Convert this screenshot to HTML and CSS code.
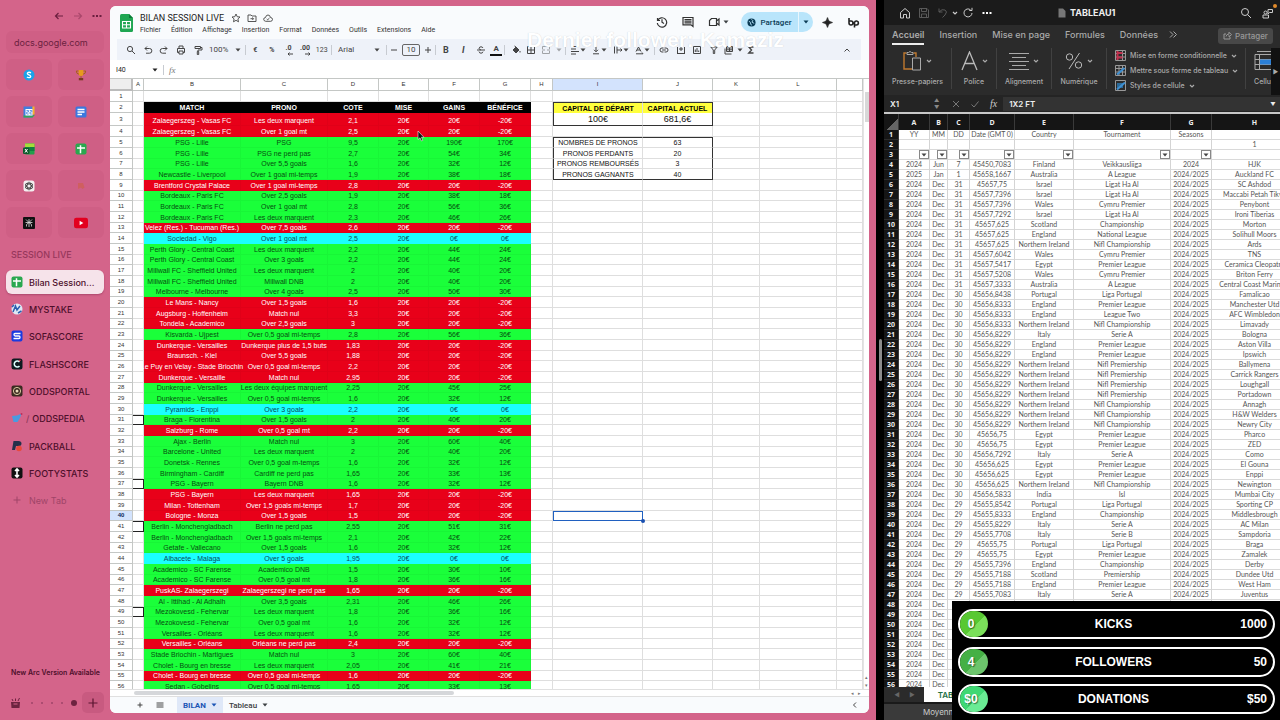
FILE: index.html
```html
<!DOCTYPE html>
<html lang="fr">
<head>
<meta charset="utf-8">
<title>BILAN SESSION LIVE</title>
<link rel="stylesheet" href="styles.css">
</head>
<body>
<svg class="sprite" aria-hidden="true">
  <symbol id="caret" viewBox="0 0 6 6"><path d="M.5 1.5h5L3 4.5z" fill="currentColor"/></symbol>
  <symbol id="chev" viewBox="0 0 6 6"><path d="M1 2l2 2 2-2" fill="none" stroke="currentColor" stroke-width="1.2"/></symbol>
  <symbol id="sheets" viewBox="0 0 12 12"><rect x=".5" y=".5" width="11" height="11" rx="2" fill="#2aa84f"/><path d="M2 5h8M5.5 2.200v8" stroke="#fff" stroke-width="1.500"/></symbol>
</svg>

<main class="arc">
  <aside class="sidebar">
    <div class="nav">
      <button aria-label="Retour"><svg width="10" height="10" viewBox="0 0 10 10"><path d="M9 5H1.500M4.500 2l-3 3 3 3"/></svg></button>
      <button aria-label="Avancer" class="dim"><svg width="10" height="10" viewBox="0 0 10 10"><path d="M1 5h7.500M5.500 2l3 3-3 3"/></svg></button>
      <button aria-label="Plus"><svg width="10" height="10" viewBox="0 0 10 10"><path d="M.5 5h2M4 5h2M7.500 5h2" stroke-width="1.800"/></svg></button>
    </div>
    <input class="url" aria-label="Adresse" value="docs.google.com">
    <div class="tiles">
      <button aria-label="Shazam"><svg viewBox="0 0 12 12"><circle cx="6" cy="6" r="5.500" fill="#1aa3e8"/><path d="M8 3.800C6 2.800 4.200 3.400 4.400 4.700 4.600 6 7.700 5.700 7.700 7.400 7.700 8.800 5.500 9 3.900 8" stroke="#fff" fill="none" stroke-width="1.400"/></svg></button>
      <button aria-label="Trophée"><svg viewBox="0 0 12 12"><path d="M3.500 1h5v3.500Q8.500 7 6 7 3.500 7 3.500 4.500z" fill="#e79a1c"/><path d="M3.500 2H1.300q0 3 2.700 3.200M8.500 2h2.200q0 3-2.700 3.200M6 7v2.500" stroke="#a8601a" fill="none"/><path d="M3.800 9h4.400v2.300H3.800z" fill="#7a3a20"/></svg></button>
      <button aria-label="Agenda"><svg viewBox="0 0 12 12"><path d="M.5.5h9v11h-9z" fill="#3f7fe0"/><path d="M9.500.5h2v8h-2z" fill="#f4b62c"/><path d="M.5 9.500h9l2-1v1l-2 2h-9z" fill="#36a556"/><path d="M2.500 3h7v6.500h-7z" fill="#fff"/><path d="M3.500 4.500h2v1.500h-1.800v2h2M6.800 4.500h2v1.500H7v2h2" stroke="#3f7fe0" fill="none" stroke-width=".8"/></svg></button>
      <button aria-label="Docs"><svg viewBox="0 0 12 12"><rect x=".5" y=".5" width="11" height="11" rx="1.500" fill="#3b78de"/><path d="M2.500 3.500h7M2.500 6h7M2.500 8.500h4.500" stroke="#fff" stroke-width="1.300"/></svg></button>
      <button aria-label="Excel"><svg viewBox="0 0 12 12"><rect x="2" y=".5" width="9.500" height="11" rx="1" fill="#22a04c"/><path d="M2 .5h9.500v3.500H2z" fill="#a5dd3a"/><path d="M6.500 4h5v4h-5z" fill="#10803e"/><rect y="4.500" width="6.500" height="6.500" rx="1" fill="#0d5a2c"/><path d="M2 6l2.500 3.500M4.500 6L2 9.500" stroke="#fff"/></svg></button>
      <button aria-label="Sheets"><svg viewBox="0 0 12 12"><use href="#sheets"/></svg></button>
      <button aria-label="ChatGPT"><svg viewBox="0 0 12 12"><rect x=".5" y=".5" width="11" height="11" rx="2.500" fill="#f3eef0"/><g fill="none" stroke="#333" stroke-width=".7"><ellipse cx="6" cy="6" rx="2" ry="4"/><ellipse cx="6" cy="6" rx="2" ry="4" transform="rotate(60 6 6)"/><ellipse cx="6" cy="6" rx="2" ry="4" transform="rotate(120 6 6)"/></g></svg></button>
      <button aria-label="Extension"><svg viewBox="0 0 12 12"><path d="M3 3h5l1.500 4.500-2 1.500L6 7.500 3 9z" fill="#ce604f" opacity=".7"/></svg></button>
      <button aria-label="Perplexity"><svg viewBox="0 0 12 12"><rect width="12" height="12" rx="1" fill="#111"/><path d="M6 2v8M3 2.500L6 5.500l3-3M2.500 5.500h7M3.500 9.500V7.500L6 5.500l2.500 2v2" fill="none" stroke="#ddd" stroke-width=".8"/></svg></button>
      <button aria-label="YouTube"><svg viewBox="0 0 12 12" class="yt"><rect y="1.500" width="12" height="9" rx="2" fill="#e3001f"/><path d="M4.800 4l3.200 2-3.200 2z" fill="#fff"/></svg></button>
    </div>
    <h2 class="space-name">SESSION LIVE</h2>
    <nav class="tabs">
      <a href="#" class="active"><svg viewBox="0 0 12 12"><use href="#sheets"/></svg>Bilan Session...</a>
      <a href="#"><svg viewBox="0 0 12 12"><circle cx="6" cy="6" r="5.500" fill="#dfe9f5"/><path d="M2 9l2.500-6L6 7l3-4M7 10l3.500-2M1 4l2-2" stroke="#2a5fb0" fill="none" stroke-width="1.500"/></svg>MYSTAKE</a>
      <a href="#"><svg viewBox="0 0 12 12"><rect x=".5" y=".5" width="11" height="11" rx="2" fill="#1b3be0"/><path d="M9.500 3.500H4Q3 3.500 3 4.500T4 6h4Q9 6 9 7.200T8 8.500H2.500" stroke="#fff" fill="none" stroke-width="1.300"/></svg>SOFASCORE</a>
      <a href="#"><svg viewBox="0 0 12 12"><rect x=".5" y=".5" width="11" height="11" rx="2.500" fill="#0d1a20"/><path d="M8.500 4A3 3 0 1 0 8.500 8" fill="none" stroke="#dff" stroke-width="1.500"/><path d="M8 3l1.500-1" stroke="#e0304a" stroke-width="1.500"/></svg>FLASHSCORE</a>
      <a href="#"><svg viewBox="0 0 12 12"><rect x=".5" y=".5" width="11" height="11" rx="2" fill="#3a2a20"/><circle cx="6" cy="6" r="3.600" fill="none" stroke="#d8c9a0"/><circle cx="6" cy="6" r="1.500" fill="#e9dcb8"/></svg>ODDSPORTAL</a>
      <a href="#"><svg viewBox="0 0 12 12"><path d="M1 4l5-.5 4.500-2L9 6 6.500 10H2.500z" fill="#4a9be0"/><circle cx="10.500" cy="2" r="1" fill="#c0305a"/></svg><span class="slash">/</span>ODDSPEDIA</a>
      <a href="#"><svg viewBox="0 0 12 12"><path d="M2.500 1h5q3 0 3 2.500T7.500 6H5l-1 4H1z" fill="#25304a"/><circle cx="8" cy="8.500" r="2.800" fill="#e84a3c"/></svg>PACKBALL</a>
      <a href="#"><svg viewBox="0 0 12 12"><rect x=".5" y=".5" width="11" height="11" rx="2" fill="#111"/><path d="M6 2v8M4 4l2-2 2 2M4 8l2 2 2-2" stroke="#fff" fill="none" stroke-width="1.600"/></svg>FOOTYSTATS</a>
      <a href="#" class="new"><svg viewBox="0 0 12 12"><path d="M6 2.500v7M2.500 6h7" stroke="currentColor"/></svg>New Tab</a>
    </nav>
    <p class="arc-update">New Arc Version Available</p>
    <div class="spaces">
      <svg width="11" height="12" viewBox="0 0 11 12"><path d="M1 5h9l-.5 6h-8z" fill="#6d2340"/><path d="M3 4L2 2M5.500 4V1.500M8 4l1.500-3" stroke="#6d2340"/><path d="M3.500 7h4" stroke="#d4648a"/></svg>
      <i></i><i></i><i></i><i></i><i class="on"></i>
      <button aria-label="Nouveau"><svg width="10" height="10" viewBox="0 0 10 10"><path d="M5 .5v9M.5 5h9" stroke="#5a1530" stroke-width="1.200"/></svg></button>
    </div>
  </aside>

  <section class="gs">
    <header class="doc-head">
      <svg class="logo" viewBox="0 0 13 18"><path d="M1.500 0H9l4 4v12.500Q13 18 11.500 18h-10Q0 18 0 16.500v-15Q0 0 1.500 0z" fill="#1fa652"/><path d="M9 0l4 4H9z" fill="#0b7a38"/><path d="M2.500 7.500h8v6.500h-8zM2.500 10.700h8M6.500 7.500V14" fill="none" stroke="#fff" stroke-width="1.100"/></svg>
      <div class="doc-id">
        <div class="doc-title">
          <h1>BILAN SESSION LIVE</h1>
          <svg viewBox="0 0 10 10"><path d="M5 1l1.200 2.700 2.800.3-2.100 1.900.6 2.900L5 7.300 2.500 8.800l.6-2.900L1 4l2.800-.3z"/></svg>
          <svg viewBox="0 0 10 10"><path d="M1 2h3l1 1h4v5.500H1zM3.500 5.700h3M5.300 4.500l1.200 1.200-1.200 1.200"/></svg>
          <svg viewBox="0 0 10 10"><path d="M2.700 8.300Q.7 8 .7 6.300T2.500 4.500Q3 2 5 2t2.500 2.500Q9.500 4.700 9.500 6.400T7.700 8.300zM3.700 5.800l1 1 1.800-1.800"/></svg>
        </div>
        <nav class="menu"><a href="#">Fichier</a><a href="#">Édition</a><a href="#">Affichage</a><a href="#">Insertion</a><a href="#">Format</a><a href="#">Données</a><a href="#">Outils</a><a href="#">Extensions</a><a href="#">Aide</a></nav>
      </div>
      <div class="doc-actions">
        <button aria-label="Historique"><svg width="12" height="12" viewBox="0 0 12 12"><path d="M1.500 2v2.500H4M1.700 4.500A4.700 4.700 0 1 1 1.300 7M6 3.300V6.200l2 1.300"/></svg></button>
        <button aria-label="Commentaires"><svg width="12" height="12" viewBox="0 0 12 12"><path d="M1 1.500h10v9L9 8.800H1zM2.500 3.500h7M2.500 5.200h7M2.500 6.900h7"/></svg></button>
        <button aria-label="Visio"><svg width="12" height="12" viewBox="0 0 12 12"><path d="M3.500 2.500h5v7h-7v-5zM8.500 5l2.500-2v6L8.500 7"/></svg><svg class="car"><use href="#caret"/></svg></button>
        <div class="share"><button><svg width="9" height="9" viewBox="0 0 10 10"><circle cx="5" cy="5" r="4.500" fill="#0b3b55"/><path d="M2 3.500l2 1.500v2l1.500 1M5 1.500L6.500 3 5.500 4.500 8 6" stroke="#b9e5fb" fill="none"/></svg>Partager</button><button aria-label="Options de partage"><svg class="car"><use href="#caret"/></svg></button></div>
        <button aria-label="Gemini"><svg width="11" height="11" viewBox="0 0 12 12"><path d="M6 .5Q6.500 5.500 11.500 6 6.500 6.500 6 11.500 5.500 6.500.5 6 5.500 5.500 6 .5z" fill="#222"/></svg></button>
        <button aria-label="Compte"><svg width="13" height="11" viewBox="0 0 13 11"><path d="M2 1v5a2 2 0 1 0 2-2H1.500M7.500 10.500V5.500a2 2 0 1 1 2 2.500H7" stroke="#222" stroke-width="1.600"/></svg></button>
      </div>
    </header>

    <div class="toolbar">
      <div class="g g5">
        <button aria-label="Rechercher"><svg><circle cx="4" cy="4" r="2.600"/><path d="M6 6l3 3"/></svg></button>
        <button aria-label="Annuler"><svg><path d="M2 3.500h4.500a2.300 2.300 0 0 1 0 4.700H3M4 1.500l-2 2 2 2"/></svg></button>
        <button aria-label="Rétablir"><svg><path d="M8 3.500H3.500a2.300 2.300 0 0 0 0 4.700H7M6 1.500l2 2-2 2"/></svg></button>
        <button aria-label="Imprimer"><svg><path d="M3 3V1h4v2M3 7.500H1.500V3.500h7v4H7M3 6h4v3H3z"/></svg></button>
        <button aria-label="Reproduire la mise en forme"><svg><path d="M2 1.500h5.500v2H2zM7.500 2.500H9v2.500H5v1.500M4.300 6.500h1.400v3H4.300z"/></svg></button>
      </div>
      <label class="g zoom"><select aria-label="Zoom"><option>100%</option></select><svg class="car"><use href="#caret"/></svg></label>
      <span class="sep"></span>
      <div class="g g5">
        <button><b>€</b></button><button><b>%</b></button>
        <button class="dec" aria-label="Réduire les décimales">.0<svg><path d="M8 8H3M4.500 6.500L3 8l1.500 1.500"/></svg></button>
        <button class="dec" aria-label="Ajouter une décimale">.00<svg><path d="M3 8h5M6.500 6.500L8 8 6.500 9.500"/></svg></button>
        <button>123</button>
      </div>
      <span class="sep"></span>
      <label class="g font"><select aria-label="Police"><option>Arial</option></select><svg class="car"><use href="#caret"/></svg></label>
      <span class="sep"></span>
      <div class="g size">
        <button aria-label="Réduire"><svg><path d="M2 5h6"/></svg></button>
        <input aria-label="Taille" value="10">
        <button aria-label="Augmenter"><svg><path d="M2 5h6M5 2v6"/></svg></button>
      </div>
      <span class="sep"></span>
      <div class="g g4">
        <button><b>B</b></button><button><b><em>I</em></b></button>
        <button aria-label="Barré"><svg><path d="M1 5h8M7 3Q6.500 1.800 5 1.800T3 3.200Q3 4.500 5 5M3 6.500Q3.300 8.200 5 8.200T7 6.700"/></svg></button>
        <button class="ink" aria-label="Couleur du texte">A</button>
      </div>
      <span class="sep"></span>
      <div class="g fill">
        <button aria-label="Remplissage"><svg><path d="M2 5l3-3 3 3-3 3zM3.500 1L5 2" fill="#444"/><path d="M9 6v1.500"/></svg></button>
        <button aria-label="Bordures"><svg><path d="M1.500 1.500h7v7h-7zM5 1.500v7M1.500 5h7"/></svg></button>
        <button aria-label="Fusionner" class="off"><svg><path d="M1.500 4V1.500h7V4M1.500 6v2.500h7V6M1 5h3M9 5H6"/></svg></button>
        <svg class="car off"><use href="#caret"/></svg>
      </div>
      <span class="sep"></span>
      <div class="g align">
        <button aria-label="Alignement horizontal"><svg><path d="M1 1.500h8M1 4h5M1 6.500h8M1 9h5"/></svg><svg class="car"><use href="#caret"/></svg></button>
        <button aria-label="Alignement vertical"><svg><path d="M2 8.800h6M5 1.500v5M3 4.800l2 2 2-2"/></svg><svg class="car"><use href="#caret"/></svg></button>
        <button aria-label="Retour à la ligne"><svg><path d="M1.500 1.500v7M4 1.500v7M4 5h5M7.500 3.500L9 5 7.500 6.500"/></svg><svg class="car"><use href="#caret"/></svg></button>
        <button aria-label="Rotation"><svg><path d="M2 6.500L4.500 2 7 6.500M3 5h3M2 8.800h7M8 7.500l1 1.300"/></svg><svg class="car"><use href="#caret"/></svg></button>
      </div>
      <span class="sep"></span>
      <div class="g g4">
        <button aria-label="Lien"><svg><path d="M4.500 3H3a2 2 0 0 0 0 4h1.500M5.500 3H7a2 2 0 0 1 0 4H5.500M3.200 5h3.600"/></svg></button>
        <button aria-label="Commentaire"><svg><path d="M1.500 2v6.500H8.500V2M5 2v4M3 4h4M1 8.500h8"/></svg></button>
        <button aria-label="Graphique"><svg><path d="M1.500 1.500h7v7h-7zM3.300 7V4.500M5 7V3M6.700 7V5.500"/></svg></button>
        <button aria-label="Filtre"><svg><path d="M1.800 2h6.400L5.700 5v3.500H4.300V5z"/></svg></button>
      </div>
      <div class="g view"><button aria-label="Vues"><svg><path d="M2.500 1.500h6v5h-6zM1 3.500v5.500h6.500M2.500 3h6M2.500 4.800h6M5.500 3v3.500"/></svg></button><svg class="car"><use href="#caret"/></svg><button aria-label="Fonctions"><svg><path d="M7.500 2H2.800L5.500 5 2.800 8h4.700" stroke-width="1.400"/></svg></button></div>
      <button class="fold" aria-label="Masquer"><svg><path d="M2.500 6.500L5 4l2.500 2.500"/></svg></button>
    </div>

    <div class="fx">
      <input aria-label="Zone de nom" value="I40"><svg class="car"><use href="#caret"/></svg>
      <span class="sep"></span><em>fx</em><input class="grow" aria-label="Formule">
    </div>

    <div class="grid-area">
      <div class="grid-clip">
        <table class="bilan" id="bilan">
          <colgroup><col class="c-n"><col class="c-a"><col class="c-b"><col class="c-c"><col class="c-d"><col class="c-e"><col class="c-d"><col class="c-d"><col class="c-h"><col class="c-i"><col class="c-j"><col class="c-k"><col class="c-l"><col></colgroup>
          <thead><tr><th></th><th>A</th><th>B</th><th>C</th><th>D</th><th>E</th><th>F</th><th>G</th><th>H</th><th class="sel">I</th><th>J</th><th>K</th><th>L</th><th></th></tr></thead>
          <tbody></tbody>
        </table>
      </div>
      <div class="vbar"><i></i><span>▴</span><span>▾</span></div>
    </div>
    <div class="hbar"><i></i><span>◂</span><span>▸</span></div>
    <footer class="sheet-tabs">
      <button aria-label="Ajouter une feuille"><svg width="8" height="8" viewBox="0 0 8 8"><path d="M4 1.500v5M1.500 4h5"/></svg></button>
      <button aria-label="Toutes les feuilles"><svg width="8" height="8" viewBox="0 0 8 8"><path d="M.5 2h7M.5 4h7M.5 6h7"/></svg></button>
      <button class="tab on">BILAN<svg class="car"><use href="#caret"/></svg></button>
      <button class="tab">Tableau<svg class="car"><use href="#caret"/></svg></button>
      <button class="end" aria-label="Panneau latéral"><svg width="8" height="8" viewBox="0 0 8 8"><path d="M5 1.500L2.500 4 5 6.500"/></svg></button>
    </footer>
  </section>
  <p class="follower">Dernier follower: Kamaziz</p>
  <svg class="pointer" viewBox="0 0 8 12"><path d="M1 1v8.500l2-1.700 1.500 3.200 1.300-.6L4.500 7.300H7z" fill="#111" stroke="#eee" stroke-width=".6"/></svg>
</main>

<div class="split"><i></i></div>

<section class="xl">
  <header class="xl-title">
    <button aria-label="Accueil"><svg viewBox="0 0 12 12"><path d="M1.500 5.500L6 1.500l4.500 4V11H7.500V7.500h-3V11h-3z"/></svg></button>
    <button aria-label="Enregistrer" class="dim"><svg viewBox="0 0 12 12"><path d="M1.500 1.500h7.500l1.500 1.500v7.500h-9zM3.500 1.500v3h5v-3M3.500 10.500V7h5v3.500"/></svg></button>
    <button aria-label="Annuler" class="dim undo"><svg viewBox="0 0 12 12"><path d="M2 1.500V5h3.500M2 5q3-3.500 6-2t0 5L5.500 10.500"/></svg></button>
    <svg class="car light"><use href="#chev"/></svg>
    <button aria-label="Rétablir"><svg viewBox="0 0 12 12"><path d="M10 6a4 4 0 1 1-1.500-3.200M10 .8v2.700H7.300"/></svg></button>
    <button aria-label="Plus"><svg viewBox="0 0 12 12"><path d="M1.500 6h2M5 6h2M8.500 6h2" stroke="#fff" stroke-width="2"/></svg></button>
    <h2><svg viewBox="0 0 8 10"><path d="M.5.500h4.500l2.500 2.500v6.500h-7z" fill="#777" stroke="none"/></svg>TABLEAU1</h2>
    <button aria-label="Rechercher"><svg viewBox="0 0 12 12"><circle cx="5" cy="5" r="3.500"/><path d="M7.500 7.500l3.500 3.500"/></svg></button>
    <button aria-label="Partage" class="people"><svg viewBox="0 0 12 12"><circle cx="3.500" cy="5.500" r="1.500"/><path d="M1 8h5.500v3H1zM6 2.500h4.500v3H7.500L6 7z"/></svg></button>
  </header>
  <nav class="xl-tabs"><a href="#" class="on">Accueil</a><a href="#">Insertion</a><a href="#">Mise en page</a><a href="#">Formules</a><a href="#">Données</a><a href="#" class="more" aria-label="Plus d’onglets"><svg width="8" height="7" viewBox="0 0 8 7"><path d="M1 .5l3 3-3 3M4.500.5l3 3-3 3" fill="none" stroke="#aaa"/></svg></a>
    <button><svg width="9" height="9" viewBox="0 0 9 9"><path d="M3 3H1v5h6V6M3 5.500Q3.500 3 6 3V1.200L8.500 3.700 6 5.800V4.200"/></svg>Partager</button></nav>
  <div class="ribbon">
    <button class="rb w1"><span><svg width="19" height="22" viewBox="0 0 19 22"><path d="M3.500 3H1v16h8M10.500 3H13v4" fill="none" stroke="#c07a30" stroke-width="1.400"/><path d="M4 4.500V2.500h1.500Q7 .500 8.500 2.500H10v2z" stroke="#aaa" fill="none"/><path d="M9.500 8h8v12h-8z" stroke="#aaa" fill="#2b2b2b"/></svg><svg class="car"><use href="#chev"/></svg></span>Presse-papiers</button>
    <button class="rb w2"><span><svg width="17" height="20" viewBox="0 0 17 20"><path d="M1 19L8.500 1 16 19M4 12.500h9" fill="none" stroke="#bbb" stroke-width="1.300"/></svg><svg class="car"><use href="#chev"/></svg></span>Police</button>
    <button class="rb w3"><span><svg width="20" height="20" viewBox="0 0 20 20"><path d="M0 2.500h20M3 6.500h14M0 10.500h20M3 14.500h14M0 18.500h20" stroke="#aaa" fill="none"/></svg><svg class="car"><use href="#chev"/></svg></span>Alignement</button>
    <button class="rb w3"><span><svg width="18" height="18" viewBox="0 0 18 18"><circle cx="4.500" cy="5" r="3.200" fill="none" stroke="#bbb"/><circle cx="13.500" cy="13" r="3.200" fill="none" stroke="#bbb"/><path d="M14.500 1L4 17" stroke="#bbb"/></svg><svg class="car"><use href="#chev"/></svg></span>Numérique</button>
    <div class="rlist">
      <button><svg viewBox="0 0 11 11"><path d="M.5.500h10v10H.5zM.5 3.500h10M.5 7h10M7.500.5v10" stroke="#999"/><path d="M2.500 1v9M3 3h4.500M3 7.500h4.500" stroke="#c2304e" stroke-width="2"/></svg>Mise en forme conditionnelle<svg class="car"><use href="#chev"/></svg></button>
      <button><svg viewBox="0 0 11 11"><path d="M.5.500h10v10H.5zM.5 3.500h10M.5 7h10M4 .5v10M7.500.5v10" stroke="#999"/><path d="M2 9.500L9.500 3" stroke="#3f8fd0" stroke-width="2.200"/></svg>Mettre sous forme de tableau<svg class="car"><use href="#chev"/></svg></button>
      <button><svg viewBox="0 0 11 11"><path d="M.5.500h10v10H.5z" stroke="#999"/><path d="M2 3h6v5H2z" fill="#2a6a9a" stroke="none"/><path d="M2 9.500L10 2.500" stroke="#3f8fd0" stroke-width="2"/></svg>Styles de cellule<svg class="car"><use href="#chev"/></svg></button>
    </div>
    <button class="rb cells"><span><svg width="20" height="20" viewBox="0 0 20 20"><path d="M3 .5h16M1 3.500h18v15H1zM1 8.500h18M1 13.500h18M5.500 3.500v15" stroke="#aaa" fill="none"/><path d="M6 8.500h12v5H6z" fill="#2b7fd6"/></svg></span>Cellules</button>
    <button class="next" aria-label="Suite">▶</button>
  </div>
  <div class="xl-fx"><input aria-label="Cellule" value="X1"><span class="spin"><b>▲</b><b>▼</b></span>
    <svg class="op" viewBox="0 0 8 8"><path d="M1 1l6 6M7 1L1 7"/></svg><svg class="op" viewBox="0 0 8 8"><path d="M.5 4.500L3 7l4.500-5.500"/></svg><em>fx</em>
    <input class="formula" aria-label="Formule" value="1X2 FT"><b class="drop">▼</b></div>
  <div class="xl-grid">
    <table id="matches">
      <colgroup><col class="x-n"><col class="x-a"><col class="x-b"><col class="x-c"><col class="x-d"><col class="x-e"><col class="x-f"><col class="x-g"><col class="x-h"></colgroup>
      <thead><tr><th class="corner"></th><th>A</th><th>B</th><th>C</th><th>D</th><th>E</th><th>F</th><th>G</th><th>H</th></tr></thead>
      <tbody></tbody>
    </table>
  </div>
  <div class="xl-sheets"><button aria-label="Précédent">◀</button><button aria-label="Suivant">▶</button><button class="tab">TABLEAU</button></div>
  <div class="xl-status">Moyenne</div>
</section>

<aside class="goals">
  <div class="goal kick"><b>0</b><span>KICKS</span><b>1000</b></div>
  <div class="goal follow"><b>4</b><span>FOLLOWERS</span><b>50</b></div>
  <div class="goal gift"><b>$0</b><span>DONATIONS</span><b>$50</b></div>
</aside>
<script src="app.js"></script>
</body>
</html>
```
FILE: styles.css
```css
* { box-sizing: border-box; }
html, body { height: 100%; }
body { margin: 0; display: flex; overflow: hidden; background: #000; font-family: "Liberation Sans", Arial, sans-serif; }
button, input, select { font: inherit; color: inherit; background: none; border: 0; padding: 0; margin: 0; border-radius: 0; min-width: 0; outline: 0; }
select { appearance: none; }
h1, h2, p { margin: 0; font-weight: 400; }
a { color: inherit; text-decoration: none; }
svg { flex: none; display: block; }
button { display: flex; align-items: center; justify-content: center; white-space: nowrap; }
.sprite { position: absolute; width: 0; height: 0; }
.car { width: 6px; height: 6px; color: inherit; }
.off { opacity: .45; }

/* Browser window */
.arc { position: relative; flex: 1; min-width: 0; display: flex; background: #d4648a; padding: 6px 7px 7px 0; }
.sidebar { width: 110px; flex: none; display: flex; flex-direction: column; padding: 0 6px; font-family: Inter, sans-serif; color: #4d0f2a; }
.nav { display: flex; justify-content: flex-end; gap: 9px; padding: 5px 2px 0 0; }
.nav svg { fill: none; stroke: #6b1f3f; stroke-width: 1.200; }
.nav .dim { opacity: .4; }
.url { margin-top: 10px; height: 22px; width: 98px; border-radius: 6px; padding-left: 8px; font-size: 9px; background: #cf5f85; color: #6b1f3f; }
.tiles { margin-top: 6px; display: grid; grid-template-columns: 1fr 1fr; gap: 6px; }
.tiles button { height: 31px; border-radius: 6px; background: #cf5f85; }
.tiles svg { width: 12px; height: 12px; }
.tiles .yt { width: 14px; height: 14px; }
.space-name { margin: 9px 0 0 5px; font-size: 9px; line-height: 16px; font-weight: 500; color: #96375b; white-space: nowrap; }
.tabs { margin-top: 7px; display: flex; flex-direction: column; gap: 3px; font-size: 9px; font-weight: 500; }
.tabs a { display: flex; align-items: center; gap: 6px; height: 24px; padding-left: 5px; border-radius: 6px; white-space: nowrap; }
.tabs a:nth-child(3n) { margin-bottom: 1px; }
.tabs svg { width: 12px; height: 12px; }
.tabs .active { background: #f6e3ea; box-shadow: 0 1px 2px rgba(80, 0, 40, .3); }
.tabs .new { color: #a04468; font-weight: 400; }
.slash { margin: 0 -3px 0 -3px; opacity: .5; }
.arc-update { margin: auto 0 0 5px; font-size: 7px; line-height: 10px; font-weight: 600; white-space: nowrap; }
.spaces { display: flex; align-items: center; height: 21px; margin: 14px 0 0 4px; }
.spaces i { width: 2px; height: 2px; border-radius: 50%; background: #a04468; margin-left: 8px; }
.spaces i:first-of-type { margin-left: 10px; }
.spaces .on { width: 6px; height: 6px; background: #6d2340; }
.spaces button { width: 22px; height: 21px; margin-left: 5px; border-radius: 5px; background: #c85a80; }

/* Google Sheets */
.gs { flex: 1; min-width: 0; display: flex; flex-direction: column; background: #fff; border-radius: 6px; overflow: hidden; color: #3c4043; font-family: Roboto, sans-serif; font-size: 7px; }
.doc-head { display: flex; height: 33px; flex: none; background: #f9fbfd; padding: 0 9px 0 10px; }
.logo { width: 13px; height: 18px; margin-top: 8px; }
.doc-id { margin-left: 7px; padding-top: 5px; flex: 1; }
.doc-title { display: flex; align-items: center; height: 14px; gap: 6px; }
.doc-title h1 { font-size: 9px; color: #222; margin-right: 1px; }
.doc-title svg { width: 10px; height: 10px; fill: none; stroke: #444; stroke-width: .9; }
.menu { display: flex; gap: 10px; line-height: 11px; color: #333; }
.doc-actions { display: flex; align-items: center; height: 32px; }
.doc-actions > button { height: 14px; margin-right: 14px; }
.doc-actions > button:nth-of-type(3) { gap: 3px; margin-right: 12px; }
.doc-actions > button:last-child { margin-right: 0; }
.doc-actions > button > svg:not(.car) { fill: none; stroke: #333; stroke-width: 1.200; }
.share { display: flex; height: 20px; margin-right: 9px; border-radius: 10px; overflow: hidden; background: #b9e5fb; color: #0b3b55; font-weight: 500; font-size: 8px; }
.share button { gap: 4px; width: 57px; }
.share button + button { width: 15px; border-left: 1px solid #e8f6fd; }
.toolbar { display: flex; align-items: center; height: 21px; flex: none; padding: 0 8px 0 13px; background: linear-gradient(#eef2f9, #eef2f9) 7px 0 / calc(100% - 15px) 100% no-repeat #f9fbfd; color: #444; }
.toolbar svg:not(.car) { width: 10px; height: 10px; fill: none; stroke: #444; stroke-width: 1; }
.g { display: flex; align-items: center; justify-content: space-around; flex: none; }
.g5 { width: 83px; }
.g4 { width: 66px; }
.g5 > button, .g4 > button { width: 16px; height: 14px; }
.sep { width: 1px; height: 10px; background: #c7cbd1; margin: 0 1px; flex: none; }
.zoom { width: 38px; }
.zoom select, .font select { font-size: 8px; }
.dec { position: relative; font-weight: 700; padding-bottom: 3px; }
.dec svg { position: absolute; right: 1px; bottom: 1px; }
.font { width: 52px; justify-content: space-between; padding: 0 5px 0 5px; }
.size { width: 46px; }
.size input { width: 18px; height: 12px; border: 1px solid #666; border-radius: 2px; text-align: center; font-size: 8px; }
.g4 b { font-size: 9px; }
.g4 .ink { font-weight: 700; font-size: 8px; width: 12px; height: 13px; border-bottom: 2px solid #111; }
.fill { width: 58px; padding-left: 2px; }
.align { width: 86px; }
.align button { width: 20px; }
.view { width: 36px; }
.fold { margin-left: auto; width: 12px; margin-right: 8px; }
.fx { display: flex; align-items: center; height: 19px; flex: none; padding: 1px 0 0 6px; color: #222; border-bottom: 1px solid #c4c7c5; }
.fx input { width: 36px; height: 14px; }
.fx .sep { margin: 0 5px; }
.fx em { font-family: "Liberation Serif", serif; font-size: 9px; color: #777; }
.fx .grow { flex: 1; }
.grid-area { display: flex; flex: 1; min-height: 0; }
.grid-clip { flex: 1; min-width: 0; overflow: hidden; }
table { table-layout: fixed; border-collapse: separate; border-spacing: 0; width: 100%; }
th, td { padding: 0; font-weight: 400; white-space: nowrap; text-align: center; }
.bilan { font: 7px/9px "Liberation Sans", Arial, sans-serif; color: #111; }
.bilan th, .bilan td { border-right: 1px solid #dedede; border-bottom: 1px solid #dedede; }
.bilan td { vertical-align: bottom; }
.bilan th { font-size: 6px; color: #333; }
.bilan thead th { border-color: #c4c7c5; }
.bilan thead th:first-child { background: #eee; border-right: 2px solid #bbb; border-bottom: 2px solid #bbb; }
.bilan tbody th { border-color: #c4c7c5; }
.bilan .sel { background: #d3e3fd; }
.bilan tbody .sel { font-weight: 700; color: #0b2a5a; }
.bilan thead tr { height: 12px; }
.bilan tbody tr { height: 11px; }
.bilan tbody tr:nth-child(3) { height: 13px; }
.bilan tbody tr:nth-child(3n+7) { height: 10px; }
.bilan td span { display: flex; justify-content: center; }
.c-n { width: 23px; } .c-a { width: 11px; } .c-b { width: 97px; } .c-c { width: 87px; } .c-d { width: 51px; } .c-e { width: 50px; }
.c-h { width: 22px; } .c-i { width: 90px; } .c-j { width: 70px; } .c-k { width: 47px; } .c-l { width: 77px; }
.bilan .head { background: #000; color: #fff; font-weight: 700; border-color: #000; }
.bilan .lost { background: #e80019; color: #fff; border-color: #e00018; }
.bilan .won { background: #1aff3a; color: #064d10; border-color: #18f637; }
.bilan .void { background: #1affff; color: #064d55; border-color: #1affff; }
.bilan .mark { border: 1px solid #222; border-left: 0; }
.bilan .cap { background: #ffff3d; font-weight: 700; color: #000; border-top: 1px solid #333; border-bottom: 0; }
.bilan .big { font-size: 9px; border-bottom-color: #333; vertical-align: middle; }
.bilan .box-l { border-left: 1px solid #333; }
.bilan .box-r { border-right-color: #333; }
.bilan .box-t { border-top: 1px solid #333; }
.bilan .box-b { border-bottom-color: #333; }
.bilan .cursor { position: relative; outline: 1px solid #2060c0; outline-offset: -1px; }
.bilan .cursor::after { content: ""; position: absolute; right: -3px; bottom: -3px; width: 4px; height: 4px; border-radius: 50%; background: #1a50b0; }
.vbar { width: 6px; display: flex; flex-direction: column; border-left: 1px solid #e4e4e4; font-size: 5px; line-height: 8px; color: #777; text-align: center; }
.vbar i { width: 4px; height: 30px; margin: 13px 0 auto 1px; background: #d8d8d8; }
.hbar { display: flex; gap: 4px; height: 8px; flex: none; align-items: center; padding: 0 8px 0 24px; font-size: 5px; color: #777; border-bottom: 1px solid #e0e0e0; border-top: 1px solid #e0e0e0; }
.hbar i { width: 44%; height: 4px; border-radius: 2px; background: #d5d7da; margin-right: auto; }
.sheet-tabs { display: flex; height: 16px; flex: none; background: #f9fbfd; padding: 0 10px 0 20px; font-size: 8px; font-weight: 500; }
.sheet-tabs > button:not(.tab) { width: 20px; }
.sheet-tabs > button:not(.tab) svg { fill: none; stroke: #444; }
.sheet-tabs .tab { gap: 5px; padding: 0 6px; }
.sheet-tabs .on { background: #dfe8f8; color: #1b55b5; font-weight: 700; margin-left: 7px; }
.sheet-tabs .end { width: 8px !important; margin-left: auto; }
.follower { position: absolute; left: 527px; top: 28px; font: 700 21px/24px "Liberation Sans", Arial, sans-serif; color: #fff; text-shadow: 0 0 1px rgba(120, 130, 140, .4); white-space: nowrap; }
.pointer { position: absolute; left: 417px; top: 130px; width: 8px; height: 12px; }

.split { width: 8px; flex: none; display: flex; align-items: center; justify-content: center; background: #000; }
.split i { width: 3px; height: 42px; border-radius: 2px; background: #8c8c8c; }

/* Excel */
.xl { flex: 0 0 396px; min-width: 0; display: flex; flex-direction: column; overflow: hidden; background: #2b2b2b; color: #aaa; font-family: Inter, sans-serif; font-size: 7px; }
.xl-title { display: flex; align-items: center; height: 25px; flex: none; background: #1b1b1b; padding: 0 6px 0 15px; }
.xl-title svg { fill: none; stroke: #ccc; }
.xl-title button svg { width: 12px; height: 12px; }
.xl-title button { margin-right: 7px; }
.xl-title .undo { margin-right: 3px; }
.xl-title .light { margin-right: 4px; color: #ccc; }
.xl-title .dim { opacity: .35; }
.xl-title h2 { display: flex; align-items: center; gap: 4px; margin: 0 auto 0 58px; font-size: 9px; font-weight: 700; color: #eee; }
.xl-title h2 svg { width: 8px; height: 10px; }
.xl-title .people { position: relative; margin: 0 0 0 3px; }
.xl-title .people::after { content: ""; position: absolute; right: -3px; top: -3px; width: 4px; height: 4px; border-radius: 50%; background: #e08a2a; }
.xl-tabs { display: flex; align-items: center; gap: 15px; height: 21px; flex: none; padding: 0 7px 0 8px; font-size: 9px; font-weight: 500; white-space: nowrap; }
.xl-tabs a { line-height: 17px; border-bottom: 2px solid transparent; }
.xl-tabs .on { border-color: #eee; font-weight: 600; }
.xl-tabs .more { display: flex; margin-left: -4px; }
.xl-tabs button { margin-left: auto; gap: 3px; width: 55px; height: 16px; border-radius: 3px; background: #484848; color: #999; font-size: 8px; }
.xl-tabs button svg { fill: none; stroke: #999; }
.ribbon { display: flex; height: 49px; flex: none; padding-top: 2px; position: relative; }
.rb { flex-direction: column; height: 41px; border-right: 1px solid #414141; justify-content: space-between; flex: none; padding: 2px 0 3px; font-weight: 500; }
.rb span { display: flex; align-items: center; justify-content: center; gap: 4px; height: 22px; }
.w1 { width: 68px; } .w2 { width: 45px; } .w3 { width: 55px; }
.rlist { display: flex; flex-direction: column; gap: 4px; padding: 2px 0 0 8px; width: 139px; height: 41px; flex: none; border-right: 1px solid #414141; font-weight: 500; }
.rlist button { gap: 4px; justify-content: flex-start; height: 11px; }
.rlist button > svg:not(.car) { width: 11px; height: 11px; fill: none; }
.cells { border: 0; padding-left: 8px; align-items: flex-start; }
.next { position: absolute; right: 0; top: 2px; width: 9px; height: 47px; background: #111; font-size: 6px; }
.xl-fx { display: flex; align-items: center; height: 19px; flex: none; padding-left: 6px; background: #242424; border-bottom: 2px solid #c8c8c8; color: #eee; font-size: 8px; font-weight: 600; }
.xl-fx input { width: 44px; height: 14px; }
.spin { display: flex; flex-direction: column; font-size: 5px; line-height: 7px; color: #888; width: 18px; }
.op { width: 8px; height: 8px; margin-right: 11px; fill: none; stroke: #777; }
.xl-fx em { font: italic 10px "Liberation Serif", serif; color: #ccc; margin-right: 6px; }
.xl-fx .formula { flex: 1; background: #333; padding-left: 6px; }
.drop { width: 14px; background: #333; line-height: 14px; font-size: 5px; text-align: center; }
.xl-grid { flex: 1; min-height: 0; overflow: hidden; background: #fff; }
.xl-grid table { width: 414px; font: 7px/9px Lato, sans-serif; color: #555; }
.x-n { width: 15px; } .x-a { width: 31px; } .x-b { width: 18px; } .x-c { width: 22px; } .x-d { width: 45px; } .x-e { width: 59px; }
.x-f { width: 97px; } .x-g { width: 41px; } .x-h { width: 86px; }
.xl-grid thead tr { height: 16px; }
.xl-grid tbody tr { height: 10px; }
.xl-grid th { background: #151515; color: #eee; font: 700 7px/9px "Open Sans", sans-serif; border-right: 1px solid #3a3a3a; }
.xl-grid tbody th { border-bottom: 1px solid #2b2b2b; }
.xl-grid .corner { background: linear-gradient(135deg, #151515 60%, #666 60%); }
.xl-grid td { border-right: 1px solid #d4d4d4; border-bottom: 1px solid #d9d9d9; }
.xl-grid td button { margin-left: auto; width: 10px; height: 9px; border: 1px solid #888; color: #444; background: #fff; }
.xl-sheets { display: flex; height: 15px; flex: none; padding-left: 8px; color: #666; font-size: 6px; }
.xl-sheets button { width: 10px; margin-right: 5px; }
.xl-sheets .tab { width: 60px; margin-left: 2px; padding-left: 4px; background: #fff; color: #1d7044; font-size: 8px; font-weight: 600; }
.xl-status { height: 18px; flex: none; border-top: 2px solid #1a1a1a; background: #3a3a3a; padding-left: 39px; font-size: 8px; line-height: 16px; color: #ccc; }

/* Stream goals */
.goals { position: absolute; right: 0; bottom: 0; width: 328px; height: 119px; padding: 8px 5px 6px 6px; display: flex; flex-direction: column; justify-content: space-between; background: #000; font-weight: 700; font-size: 12px; color: #fff; }
.goal { display: grid; grid-template-columns: 1fr auto 1fr; align-items: center; height: 30px; padding-right: 6px; border: 2px solid #fff; border-radius: 15px; }
.goal b { text-align: right; text-shadow: 1px 1px 1px rgba(0, 0, 0, .5); }
.goal b:first-child { width: 28px; line-height: 26px; padding-right: 6px; text-align: center; border-radius: 13px; }
.kick b:first-child { background: linear-gradient(135deg, #58c832 55%, #7be05a 55%); }
.follow b:first-child { background: linear-gradient(135deg, #45b045 55%, #6cc56c 55%); }
.gift b:first-child { background: linear-gradient(135deg, #3fd873 55%, #6aeb94 55%); }
```
FILE: app.js
```js
const L = 'lost', W = 'won', V = 'void';
const bets = [
  [L, 'Zalaegerszeg - Vasas FC', 'Les deux marquent', '2,1', 20],
  [L, 'Zalaegerszeg - Vasas FC', 'Over 1 goal mt', '2,5', 20],
  [W, 'PSG - Lille', 'PSG', '9,5', 190],
  [W, 'PSG - Lille', 'PSG ne perd pas', '2,7', 54],
  [W, 'PSG - Lille', 'Over 5,5 goals', '1,6', 32],
  [W, 'Newcastle - Liverpool', 'Over 1 goal mi-temps', '1,9', 38],
  [L, 'Brentford Crystal Palace', 'Over 1 goal mi-temps', '2,8', 20],
  [W, 'Bordeaux - Paris FC', 'Over 2,5 goals', '1,9', 38],
  [W, 'Bordeaux - Paris FC', 'Over 1 goal mt', '2,8', 56],
  [W, 'Bordeaux - Paris FC', 'Les deux marquent', '2,3', 46],
  [L, 'Velez (Res.) - Tucuman (Res.)', 'Over 7,5 goals', '2,6', 20],
  [V, 'Sociedad - Vigo', 'Over 1 goal mt', '2,5', 0],
  [W, 'Perth Glory - Central Coast', 'Les deux marquent', '2,2', 44],
  [W, 'Perth Glory - Central Coast', 'Over 3 goals', '2,2', 44],
  [W, 'Millwall FC - Sheffield United', 'Les deux marquent', '2', 40],
  [W, 'Millwall FC - Sheffield United', 'Millwall DNB', '2', 40],
  [W, 'Melbourne - Melbourne', 'Over 4 goals', '2,5', 50],
  [L, 'Le Mans - Nancy', 'Over 1,5 goals', '1,6', 20],
  [L, 'Augsburg - Hoffenheim', 'Match nul', '3,3', 20],
  [L, 'Tondela - Academico', 'Over 2,5 goals', '3', 20],
  [W, 'Kisvarda - Ujpest', 'Over 0,5 goal mi-temps', '2,8', 56],
  [L, 'Dunkerque - Versailles', 'Dunkerque plus de 1,5 buts', '1,83', 20],
  [L, 'Braunsch. - Kiel', 'Over 5,5 goals', '1,88', 20],
  [L, 'Le Puy en Velay - Stade Briochin', 'Over 0,5 goal mi-temps', '2,2', 20],
  [L, 'Dunkerque - Versaille', 'Match nul', '2,95', 20],
  [W, 'Dunkerque - Versailles', 'Les deux équipes marquent', '2,25', 45],
  [W, 'Dunkerque - Versailles', 'Over 0,5 goal mi-temps', '1,6', 32],
  [V, 'Pyramids - Enppi', 'Over 3 goals', '2,2', 0],
  [W, 'Braga - Fiorentina', 'Over 1,5 goals', '2', 40],
  [L, 'Salzburg - Rome', 'Over 0,5 goal mt', '2,2', 20],
  [W, 'Ajax - Berlin', 'Match nul', '3', 60],
  [W, 'Barcelone - United', 'Les deux marquent', '2', 40],
  [W, 'Donetsk - Rennes', 'Over 0,5 goal m-temps', '1,6', 32],
  [W, 'Birmingham - Cardiff', 'Cardiff ne perd pas', '1,65', 33],
  [W, 'PSG - Bayern', 'Bayern DNB', '1,6', 32],
  [L, 'PSG - Bayern', 'Les deux marquent', '1,65', 20],
  [L, 'Milan - Tottenham', 'Over 1,5 goals mi-temps', '1,7', 20],
  [L, 'Bologne - Monza', 'Over 1,5 goals', '1,5', 20],
  [W, 'Berlin - Monchengladbach', 'Berlin ne perd pas', '2,55', 51],
  [W, 'Berlin - Monchengladbach', 'Over 1,5 goals mi-temps', '2,1', 42],
  [W, 'Getafe - Vallecano', 'Over 1,5 goals', '1,6', 32],
  [V, 'Albacete - Malaga', 'Over 5 goals', '1,95', 0],
  [W, 'Academico - SC Farense', 'Academico DNB', '1,5', 30],
  [W, 'Academico - SC Farense', 'Over 0,5 goal mt', '1,8', 36],
  [L, 'PuskAS-  Zalaegerszegi', 'Zalaegerszegi ne perd pas', '1,65', 20],
  [W, 'Al - Ittihad - Al Adhalh', 'Over 3,5 goals', '2,31', 46],
  [W, 'Mezokovesd - Fehervar', 'Les deux marquent', '1,8', 36],
  [W, 'Mezokovesd - Fehervar', 'Over 0,5 goal mt', '1,6', 32],
  [W, 'Versailles - Orléans', 'Les deux marquent', '1,6', 32],
  [L, 'Versailles - Orléans', 'Orléans ne perd pas', '2,4', 20],
  [W, 'Stade Briochin - Martigues', 'Match nul', '3', 60],
  [W, 'Cholet - Bourg en bresse', 'Les deux marquent', '2,05', 41],
  [L, 'Cholet - Bourg en bresse', 'Over 0,5 goal mi-temps', '1,6', 20],
  [W, 'Sedan - Gobelins', 'Over 0,5 goal mi-temps', '1,65', 33]
];
const summary = {
  2: ['CAPITAL DE DÉPART', 'CAPITAL ACTUEL', 'cap'],
  3: ['100€', '681,6€', 'big'],
  5: ['NOMBRES DE PRONOS', '63', 'box-t'],
  6: ['PRONOS PERDANTS', '20', ''],
  7: ['PRONOS REMBOURSÉS', '3', ''],
  8: ['PRONOS GAGNANTS', '40', 'box-b']
};
const marked = [31, 37, 41, 49];
const td = (text, cls = '') => `<td class="${cls}">${text === '' ? '' : `<span>${text}</span>`}</td>`;

function betRow(n) {
  let main;
  if (n === 1) main = td('').repeat(6);
  else if (n === 2) main = ['MATCH', 'PRONO', 'COTE', 'MISE', 'GAINS', 'BÉNÉFICE'].map(t => td(t, 'head')).join('');
  else {
    const [state, match, prono, odds, gain] = bets[n - 3];
    const net = state === V ? 0 : state === L ? -20 : gain - 20;
    main = [match, prono, odds, '20€', gain + '€', net + '€'].map(t => td(t, state)).join('');
  }
  const s = summary[n];
  const side = s ? td(s[0], s[2] + ' box-l') + td(s[1], s[2] + ' box-r') : td('', n === 40 ? 'cursor' : '') + td('');
  return `<tr><th class="${n === 40 ? 'sel' : ''}">${n}</th>${td('', marked.includes(n) ? 'mark' : '')}${main}${td('')}${side}${td('').repeat(3)}</tr>`;
}
document.querySelector('#bilan tbody').innerHTML = Array.from({ length: 56 }, (_, i) => betRow(i + 1)).join('');

const matches = `2024|Jun|7|45450,7083|Finland|Veikkausliiga|2024|HJK
2025|Jan|1|45658,1667|Australia|A League||Auckland FC
2024|Dec|31|45657,75|Israel|Ligat Ha Al||SC Ashdod
2024|Dec|31|45657,7396|Israel|Ligat Ha Al||Maccabi Petah Tikva
2024|Dec|31|45657,7396|Wales|Cymru Premier||Penybont
2024|Dec|31|45657,7292|Israel|Ligat Ha Al||Ironi Tiberias
2024|Dec|31|45657,625|Scotland|Championship||Morton
2024|Dec|31|45657,625|England|National League||Solihull Moors
2024|Dec|31|45657,625|Northern Ireland|Nifl Championship||Ards
2024|Dec|31|45657,6042|Wales|Cymru Premier||TNS
2024|Dec|31|45657,5417|Egypt|Premier League||Ceramica Cleopatra
2024|Dec|31|45657,5208|Wales|Cymru Premier||Briton Ferry
2024|Dec|31|45657,3333|Australia|A League||Central Coast Mariners
2024|Dec|30|45656,8438|Portugal|Liga Portugal||Famalicao
2024|Dec|30|45656,8333|England|Premier League||Manchester Utd
2024|Dec|30|45656,8333|England|League Two||AFC Wimbledon
2024|Dec|30|45656,8333|Northern Ireland|Nifl Championship||Limavady
2024|Dec|30|45656,8229|Italy|Serie A||Bologna
2024|Dec|30|45656,8229|England|Premier League||Aston Villa
2024|Dec|30|45656,8229|England|Premier League||Ipswich
2024|Dec|30|45656,8229|Northern Ireland|Nifl Premiership||Ballymena
2024|Dec|30|45656,8229|Northern Ireland|Nifl Premiership||Carrick Rangers
2024|Dec|30|45656,8229|Northern Ireland|Nifl Premiership||Loughgall
2024|Dec|30|45656,8229|Northern Ireland|Nifl Premiership||Portadown
2024|Dec|30|45656,8229|Northern Ireland|Nifl Championship||Annagh
2024|Dec|30|45656,8229|Northern Ireland|Nifl Championship||H&amp;W Welders
2024|Dec|30|45656,8229|Northern Ireland|Nifl Championship||Newry City
2024|Dec|30|45656,75|Egypt|Premier League||Pharco
2024|Dec|30|45656,75|Egypt|Premier League||ZED
2024|Dec|30|45656,7292|Italy|Serie A||Como
2024|Dec|30|45656,625|Egypt|Premier League||El Gouna
2024|Dec|30|45656,625|Egypt|Premier League||Enppi
2024|Dec|30|45656,625|Northern Ireland|Nifl Championship||Newington
2024|Dec|30|45656,5833|India|Isl||Mumbai City
2024|Dec|29|45655,8542|Portugal|Liga Portugal||Sporting CP
2024|Dec|29|45655,8333|England|Championship||Middlesbrough
2024|Dec|29|45655,8229|Italy|Serie A||AC Milan
2024|Dec|29|45655,7708|Italy|Serie B||Sampdoria
2024|Dec|29|45655,75|Portugal|Liga Portugal||Braga
2024|Dec|29|45655,75|Egypt|Premier League||Zamalek
2024|Dec|29|45655,7396|England|Championship||Derby
2024|Dec|29|45655,7188|Scotland|Premiership||Dundee Utd
2024|Dec|29|45655,7188|England|Premier League||West Ham
2024|Dec|29|45655,7083|Italy|Serie A||Juventus`.split('\n').map(r => r.split('|'));

const cells = list => list.map(t => `<td>${t}</td>`).join('');
const filter = '<button aria-label="Filtrer"><svg class="car"><use href="#caret"/></svg></button>';
let rows = [
  ['YY', 'MM', 'DD', 'Date (GMT 0)', 'Country', 'Tournament', 'Seasons', ''],
  ['', '', '', '', '', '', '', '1'],
  [filter, filter, filter, filter, filter, filter, filter, '']
];
matches.forEach(m => rows.push([...m.slice(0, 6), m[6] || '2024/2025', m[7]]));
while (rows.length < 56) rows.push(['2024', 'Dec', '', '', '', '', '', '']);
document.querySelector('#matches tbody').innerHTML = rows.map((r, i) => `<tr><th>${i + 1}</th>${cells(r)}</tr>`).join('');
```
